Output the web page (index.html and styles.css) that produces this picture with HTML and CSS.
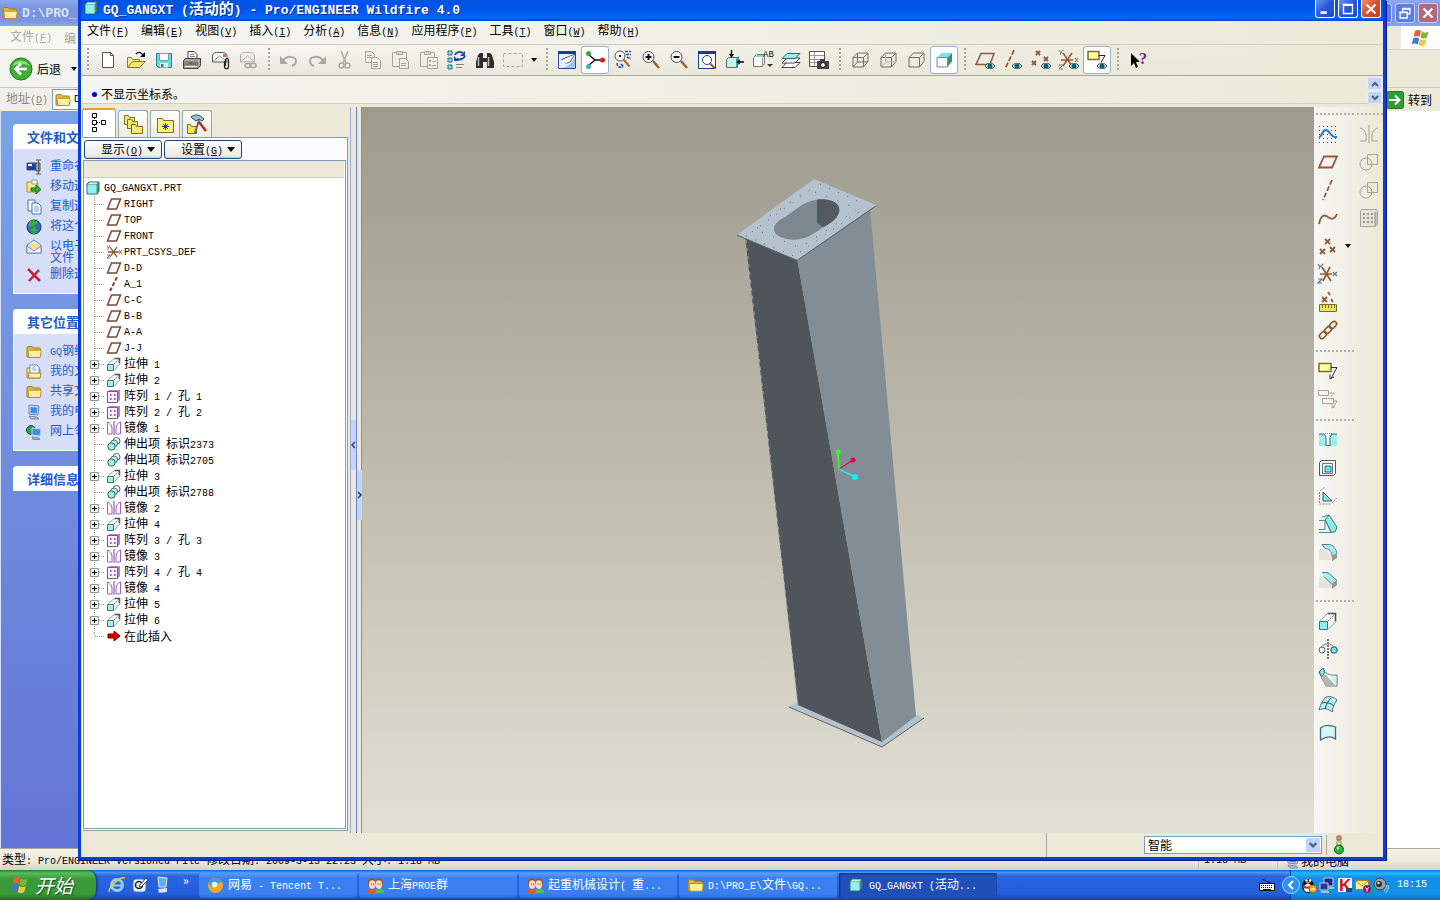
FILE: index.html
```html
<!DOCTYPE html>
<html lang="zh-CN">
<head>
  <meta charset="UTF-8">
  <meta name="viewport" content="width=device-width, initial-scale=1.0">
  <title>GQ_GANGXT (活动的) - Pro/ENGINEER Wildfire 4.0</title>
  <link rel="stylesheet" href="styles.css">
</head>
<body>

<!-- shared icons -->
<svg class="sprite" aria-hidden="true">
  <symbol id="part" viewBox="0 0 14 14"><path d="M1 3l2-2h10v9l-2 3H1z" fill="#4a8f92" stroke="#3a5c60"/><path d="M1.500 3.500h9v9h-9z" fill="#8ff0ee"/><path d="M2 3l1.500-1.500H12L10.500 3z" fill="#c8ffff"/></symbol>
  <symbol id="plane" viewBox="0 0 16 14"><path d="M5.500 2h9l-4 10h-9z" fill="none" stroke="#7a4a34" stroke-width="1.500"/></symbol>
  <symbol id="axis" viewBox="0 0 16 14"><path d="M11 0L4 14" fill="none" stroke="#7a4a24" stroke-width="2" stroke-dasharray="4 2"/></symbol>
  <symbol id="csys" viewBox="0 0 16 14"><path d="M2 7h11M4 2l7 10M11 2L4 12" stroke="#8a5a2c" stroke-width="1.300"/><path d="M1 1l1.500 2L4 0M2.500 3L1.500 5M1 10h3l-3 3h3M13 5l3 4M16 5l-3 4" stroke="#777" fill="none"/></symbol>
  <symbol id="extrude" viewBox="0 0 16 14"><path d="M1.500 7.500h6v6h-6z" fill="#9ff3ea" stroke="#3d7670"/><path d="M8.500 1.500h5v5" fill="none" stroke="#2f5f58" stroke-width="1.500"/><path d="M1.500 7l7-5.500M8 13.500l6-7" stroke="#999" fill="none"/><path d="M8 7l5-5" stroke="#777" stroke-dasharray="2 1"/></symbol>
  <symbol id="pattern" viewBox="0 0 16 14"><path d="M1 3l2-2h11v10l-3 3H1z" fill="#b088c0"/><path d="M1.500 2.500h10v11h-10z" fill="#fbf2ff" stroke="#80508f"/><path d="M4 5h1.500v2H4zM8 5h1.500v2H8zM4 9h1.500v2H4zM8 9h1.500v2H8z" fill="#a04cc0"/></symbol>
  <symbol id="mirror" viewBox="0 0 16 14"><path d="M8 0v14" stroke="#704890"/><path d="M1.500 13V1C4 2 6 4 6 7v6zM14.500 13V1C12 2 10 4 10 7v6z" fill="#fdf8ff" stroke="#a65cc0"/></symbol>
  <symbol id="protrude" viewBox="0 0 16 14"><circle cx="10.500" cy="4" r="3.500" fill="#e8fff8" stroke="#456c66"/><circle cx="8" cy="6.500" r="3.500" fill="#c5f5ea" stroke="#456c66"/><circle cx="5.500" cy="9.500" r="3.700" fill="#9ff0e2" stroke="#2f6058"/></symbol>
  <symbol id="insert" viewBox="0 0 16 14"><path d="M2 5h6V2l6 5-6 5V9H2z" fill="#d80000" stroke="#700"/></symbol>
  <symbol id="b-plus" viewBox="0 0 20 16"><path d="M8.500 0v16M13 8.500h6" stroke="#b48a8a" stroke-dasharray="1 1"/><path d="M4.500 4.500h8v8h-8z" fill="#f2f2ee" stroke="#8a97a0"/><path d="M6 8.500h5M8.500 6v5" stroke="#000"/></symbol>
  <symbol id="b-line" viewBox="0 0 20 16"><path d="M8.500 0v16M9 8.500h10" stroke="#b48a8a" stroke-dasharray="1 1"/></symbol>
  <symbol id="b-end" viewBox="0 0 20 16"><path d="M8.500 0v8M9 8.500h10" stroke="#b48a8a" stroke-dasharray="1 1"/></symbol>
  <symbol id="folder" viewBox="0 0 16 16"><path d="M1 4c0-1 .5-1.500 1.500-1.500H6L7.500 4H13c1 0 1.500.5 1.500 1.500V12c0 1-.5 1.500-1.500 1.500H2.500C1.500 13.500 1 13 1 12z" fill="#e8b83c" stroke="#a07a20"/><path d="M2 7.500c0-1 .5-1.300 1.300-1.300h10.400c1 0 1.500.4 1.500 1.300l-.7 4.800c-.2.900-.7 1.200-1.500 1.200H3z" fill="#ffefa0" stroke="#b88d28"/></symbol>
  <symbol id="eye" viewBox="0 0 10 6"><path d="M0 3c3-4 7-4 10 0-3 4-7 4-10 0z" fill="#cfe8e8" stroke="#345"/><circle cx="5" cy="3" r="2.500" fill="#0d6470"/></symbol>
  <symbol id="flag" viewBox="0 0 20 20"><path d="M4 3c2-1.500 4-1.500 6 0L8.500 9c-2-1.500-4-1.500-6 0z" fill="#e8602c"/><path d="M11 3.500c2 1.500 4 1.500 6.500 0L16 9.500c-2 1.500-4 1.500-6.500 0z" fill="#78b83c"/><path d="M2.200 10.500c2-1.500 4-1.500 6 0l-1.500 6c-2-1.500-4-1.500-6 0z" fill="#3c78d8"/><path d="M9.200 11c2 1.500 4 1.500 6.500 0l-1.500 6c-2 1.500-4 1.500-6.500 0z" fill="#f8c83c"/></symbol>
  <symbol id="pc" viewBox="0 0 16 16"><path d="M3 1l10 1-1 9-9-1z" fill="#d8e4f4" stroke="#6a86b4"/><path d="M4.500 3l7 .5-.6 6-6.400-.6z" fill="#3c90e8"/><path d="M3 12l8 1 2 2H5z" fill="#b8c4d8" stroke="#7a88a4"/></symbol>
  <symbol id="people" viewBox="0 0 18 18"><path d="M0 18c0-8 10-8 10 0z" fill="#e85040"/><path d="M9 17c0-7 9-7 9 0z" fill="#68b84c"/><path d="M1 9C-1 0 9-1 9 5v4zM9 8c0-9 9-8 8 0z" fill="#9c4c20"/><ellipse cx="5.500" cy="8" rx="3.500" ry="4.500" fill="#ffdcb8"/><ellipse cx="12.500" cy="8" rx="3.500" ry="4.500" fill="#ffdcb8"/><path d="M4 7.500h1M6.500 7.500h1M11 7.500h1M13.500 7.500h1" stroke="#502008"/></symbol>
  <symbol id="boxback" viewBox="0 0 20 20"><path d="M3 7.500L7.500 3H18v8.500L13.500 17M13.500 7.500L18 3M3 7.500h10.500V17H3z" fill="none" stroke="#6f6e66"/></symbol>
</svg>

<div class="desktop">

  <!-- Explorer window behind -->
  <section class="explorer">
    <header class="ex-title">
      <svg class="i16"><use href="#folder"/></svg>
      <span class="ex-path">D:\PRO_</span>
      <div class="win-btns">
        <button class="wb dim" aria-label="最小化"></button>
        <button class="wb dim" aria-label="还原"><svg viewBox="0 0 20 20"><path d="M7.500 8V5h8v6h-3M7.500 5.500h8M4.500 9h8v6.500h-8zM4.500 9.500h8" fill="none" stroke="#fff" stroke-width="1.500"/></svg></button>
        <button class="wb dim close" aria-label="关闭"><svg viewBox="0 0 20 20"><path d="M5 5l10 10M15 5L5 15" stroke="#fff" stroke-width="2.500"/></svg></button>
      </div>
    </header>
    <div class="ex-menu">
      <span>文件<span class="en">(<u>F</u>)</span></span><span>编</span>
      <div class="ex-logo"><svg><use href="#flag"/></svg></div>
    </div>
    <div class="ex-tools">
      <svg class="back" viewBox="0 0 24 24"><circle cx="12" cy="12" r="11" fill="#3fae36" stroke="#1d7a1a"/><path d="M3 9C6 2 17 2 21 9c-6-3-12-3-18 0z" fill="#8fe07c"/><path d="M18 12H7M12 6.500L6.500 12l5.500 5.500" fill="none" stroke="#fff" stroke-width="2.500"/></svg>
      <span>后退</span><i class="caret"></i>
    </div>
    <div class="ex-addr">
      <label for="addr">地址<span class="en">(<u>D</u>)</span></label>
      <div class="addr-box"><svg class="i16"><use href="#folder"/></svg><input id="addr" type="text" value="D:"></div>
      <button class="go"><svg viewBox="0 0 18 18"><rect x=".5" y=".5" width="17" height="17" rx="2" fill="#2f9c38" stroke="#1b7424"/><path d="M3 9h10M9 4.500L13.500 9 9 13.500" fill="none" stroke="#fff" stroke-width="2"/></svg>转到</button>
    </div>
    <div class="ex-body">
      <aside class="ex-side">
        <div class="box">
          <h2>文件和文</h2>
          <ul>
            <li><svg viewBox="0 0 16 16"><path d="M1 4h9v7H1z" fill="#1844b0" stroke="#456"/><path d="M2 5h4v2H2z" fill="#fff"/><path d="M10 1h5M12.500 1v14M10 15h5M10 4h4v8h-4z" fill="#aab4c0" stroke="#555"/></svg><a href="#">重命名</a></li>
            <li><svg viewBox="0 0 16 16"><path d="M1 3h5l1 1h5v9H1z" fill="#ffe88c" stroke="#b08c30"/><path d="M6 1h5v4H6z" fill="#fff" stroke="#89a"/><path d="M5 9h5V6l5 4.500L10 15v-3H5z" fill="#3cae30" stroke="#1c6a18"/></svg><a href="#">移动这</a></li>
            <li><svg viewBox="0 0 16 16"><path d="M2 1h7v11H2z" fill="#eef6ff" stroke="#4c78a8"/><path d="M6 4h6l3 3v8H6z" fill="#fff" stroke="#4c78a8"/><path d="M8 8h5M8 10h5M8 12h5" stroke="#7aa4d0"/></svg><a href="#">复制这</a></li>
            <li><svg viewBox="0 0 16 16"><circle cx="8" cy="8" r="7" fill="#2f6ec0" stroke="#235"/><path d="M3 3c4-3 8-1 9 1l-4 3-5 1zM4 12l4-5 4 5H9.500v3h-3v-3z" fill="#38b030"/></svg><a href="#">将这个</a></li>
            <li class="two"><svg viewBox="0 0 16 16"><path d="M1 6l7-5 7 5v8H1z" fill="#dfe9f8" stroke="#6a86b4"/><path d="M3 5h10v5H3z" fill="#ffd98c"/><path d="M1 7l7 5 7-5v7H1z" fill="#f4f8ff" stroke="#6a86b4"/></svg><a href="#">以电子<br>文件</a></li>
            <li><svg viewBox="0 0 16 16"><path d="M2 2l12 12M13 3L3 14" stroke="#c8203c" stroke-width="2.500"/></svg><a href="#">删除这</a></li>
          </ul>
        </div>
        <div class="box">
          <h2>其它位置</h2>
          <ul>
            <li><svg><use href="#folder"/></svg><a href="#"><span class="en">GQ</span>钢结</a></li>
            <li><svg viewBox="0 0 16 16"><path d="M1 4h4l1 1h8v9H1z" fill="#ffe48c" stroke="#a8842c"/><path d="M4 1h7l2 2v7H4z" fill="#fff" stroke="#5c88b8"/><path d="M6 4h4M6 6h5" stroke="#7aa4d0"/><path d="M2 9h13l-1 5H3z" fill="#fff0a8" stroke="#a8842c"/></svg><a href="#">我的文</a></li>
            <li><svg><use href="#folder"/></svg><a href="#">共享文</a></li>
            <li><svg><use href="#pc"/></svg><a href="#">我的电</a></li>
            <li><svg viewBox="0 0 16 16"><circle cx="5" cy="6" r="4.500" fill="#2ca040" stroke="#246"/><path d="M6 4l9 1-1 7-8-1z" fill="#3c90e8" stroke="#c4d4ec"/><path d="M6 13l7 1 1 1.500H7z" fill="#aab8d0" stroke="#78a"/></svg><a href="#">网上邻</a></li>
          </ul>
        </div>
        <div class="box"><h2>详细信息</h2></div>
      </aside>
      <div class="ex-files"></div>
    </div>
    <footer class="ex-status">
      <span class="grow">类型<span class="en">: Pro/ENGINEER Versioned File </span>修改日期<span class="en">: 2009-3-13 22:23 </span>大小<span class="en">: 1.18 MB</span></span>
      <span class="cell size"><span class="en">1.18 MB</span></span>
      <span class="cell comp"><svg class="i16"><use href="#pc"/></svg>我的电脑</span>
    </footer>
  </section>

  <!-- Pro/ENGINEER window -->
  <main class="proe">
    <header class="title">
      <svg class="i14"><use href="#part"/></svg>
      <h1><span class="big">GQ_GANGXT (</span>活动的<span class="big">) - Pro/ENGINEER Wildfire 4.0</span></h1>
      <div class="win-btns">
        <button class="wb" aria-label="最小化"><svg viewBox="0 0 20 20"><path d="M5 14h7" stroke="#fff" stroke-width="3"/></svg></button>
        <button class="wb" aria-label="最大化"><svg viewBox="0 0 20 20"><path d="M5 5h10v10H5zM5 6h10" fill="none" stroke="#fff" stroke-width="1.500"/></svg></button>
        <button class="wb close" aria-label="关闭"><svg viewBox="0 0 20 20"><path d="M5 5l10 10M15 5L5 15" stroke="#fff" stroke-width="2.500"/></svg></button>
      </div>
    </header>

    <nav class="menu">
      <a href="#">文件<span class="en">(<u>F</u>)</span></a>
      <a href="#">编辑<span class="en">(<u>E</u>)</span></a>
      <a href="#">视图<span class="en">(<u>V</u>)</span></a>
      <a href="#">插入<span class="en">(<u>I</u>)</span></a>
      <a href="#">分析<span class="en">(<u>A</u>)</span></a>
      <a href="#">信息<span class="en">(<u>N</u>)</span></a>
      <a href="#">应用程序<span class="en">(<u>P</u>)</span></a>
      <a href="#">工具<span class="en">(<u>T</u>)</span></a>
      <a href="#">窗口<span class="en">(<u>W</u>)</span></a>
      <a href="#">帮助<span class="en">(<u>H</u>)</span></a>
    </nav>

    <div class="toolbar">
      <i class="grip"></i>
      <button aria-label="新建"><svg viewBox="0 0 20 20"><path d="M4.500 2.500h8l3 3v12h-11z" fill="#fff" stroke="#555"/><path d="M12.500 2.500v3h3" fill="none" stroke="#555"/></svg></button>
      <button aria-label="打开"><svg viewBox="0 0 20 20"><path d="M1.500 17V7.500h4l1 2h7V12" fill="#f8f0a0" stroke="#8a7a28"/><path d="M1.500 17.500l5-6h13l-6 6z" fill="#f6e660" stroke="#8a7a28"/><path d="M10 4c2-2.500 5-2 7 1" fill="none" stroke="#000" stroke-width="1.300"/><path d="M19 2v5h-5z" fill="#000"/></svg></button>
      <button aria-label="保存"><svg viewBox="0 0 20 20"><path d="M2.500 3.500h15v14h-13l-2-2z" fill="#6fd8dc" stroke="#2f7f88"/><path d="M5.500 3.500h9v7h-9z" fill="#f4ffff" stroke="#5aa"/><path d="M6 13h8v4.500H6z" fill="#e8f4f4"/><path d="M7 14h2.500v3H7z" fill="#2f7f88"/></svg></button>
      <button aria-label="打印"><svg viewBox="0 0 20 20"><path d="M6 10V1.500h6l3 3V10" fill="#fff" stroke="#444"/><path d="M8 4.500h4M8 6.500h5M8 8.500h5" stroke="#888"/><path d="M1.500 10.500l2-2h15v7l-2.500 3H1.500z" fill="#a8a8a0" stroke="#444"/><path d="M2 11.500h14v4H2z" fill="#787870"/><path d="M3 13h3" stroke="#3c3" stroke-width="2"/><path d="M7 13h3" stroke="#d33" stroke-width="2"/><path d="M3 16.500h12" stroke="#eee"/></svg></button>
      <button aria-label="发送"><svg viewBox="0 0 20 20"><path d="M2.500 12V6c0-2 1.500-3.500 4-3.500h6c3 0 4.500 1.500 4.500 3.500v6z" fill="#f6f6f4" stroke="#555"/><path d="M2.500 12l7-6 8 6" fill="none" stroke="#999"/><path d="M13 4h3v3h-3z" fill="#d66"/><path d="M14.500 11v5.500c0 3 4 3 4 0V10c0-2-3-2-3 0v6" fill="none" stroke="#222" stroke-width="1.200"/></svg></button>
      <button class="off" aria-label="链接"><svg viewBox="0 0 20 20"><path d="M2.500 12V6c0-2 1.500-3.500 4-3.500h6c2.500 0 4 1.500 4 3.500v6z" fill="none" stroke="#b0aea4"/><path d="M2.500 12l7-6 7 6" fill="none" stroke="#b0aea4"/><rect x="7" y="13.500" width="6" height="4" rx="2" fill="none" stroke="#aaa89e" stroke-width="1.500"/><rect x="12" y="13.500" width="6" height="4" rx="2" fill="none" stroke="#aaa89e" stroke-width="1.500"/></svg></button>
      <i class="grip"></i>
      <button class="off" aria-label="撤消"><svg viewBox="0 0 20 20"><path d="M4 11c3-6 13-5 13 0 0 2-1 4-4 5" fill="none" stroke="#aaa89e" stroke-width="2"/><path d="M1 6v8h8z" fill="#aaa89e"/></svg></button>
      <button class="off" aria-label="重做"><svg viewBox="0 0 20 20"><path d="M16 11C13 5 3 6 3 11c0 2 1 4 4 5" fill="none" stroke="#aaa89e" stroke-width="2"/><path d="M19 6v8h-8z" fill="#aaa89e"/></svg></button>
      <button class="off" aria-label="剪切"><svg viewBox="0 0 20 20"><path d="M6 1l5 12M13 1L8 13" stroke="#aaa89e" stroke-width="1.500"/><circle cx="6.500" cy="15.500" r="2.500" fill="none" stroke="#aaa89e" stroke-width="1.500"/><circle cx="12.500" cy="15.500" r="2.500" fill="none" stroke="#aaa89e" stroke-width="1.500"/></svg></button>
      <button class="off" aria-label="复制"><svg viewBox="0 0 20 20"><path d="M2.500 1.500h6l3 3v8h-9z" fill="#f0efe8" stroke="#a5a39a"/><path d="M8.500 7.500h6l3 3v8h-9z" fill="#f0efe8" stroke="#a5a39a"/><path d="M4 5.500h5M4 7.500h4M10 12.500h5M10 14.500h5M10 16.500h5" stroke="#a5a39a"/></svg></button>
      <button class="off" aria-label="粘贴"><svg viewBox="0 0 20 20"><path d="M1.500 2.500h14v14h-14z" fill="none" stroke="#a5a39a"/><path d="M5.500 1.500h6v3h-6z" fill="#d8d6cc" stroke="#a5a39a"/><path d="M8.500 8.500h6l3 3v7h-9z" fill="#f0efe8" stroke="#a5a39a"/><path d="M10 13.500h5M10 15.500h5" stroke="#a5a39a"/></svg></button>
      <button class="off" aria-label="选择性粘贴"><svg viewBox="0 0 20 20"><path d="M1.500 2.500h14v14h-14z" fill="none" stroke="#a5a39a"/><path d="M5.500 1.500h6v3h-6z" fill="#d8d6cc" stroke="#a5a39a"/><path d="M8.500 7.500h10v11h-10z" fill="#f0efe8" stroke="#a5a39a"/><path d="M10 10h2v2h-2zM10 14h2v2h-2z" fill="#a5a39a"/><path d="M13 11.500h4M13 15.500h4" stroke="#a5a39a"/></svg></button>
      <button aria-label="再生"><svg viewBox="0 0 20 20"><path d="M1 1h4v4H1zM1 8h4v4H1zM1 15h4v4H1z" fill="#7fe0dc" stroke="#2c6c78"/><path d="M8 5c1-3 5-4 8-2" fill="none" stroke="#1c4ca8" stroke-width="2"/><path d="M18 1v5h-5z" fill="#1c4ca8"/><path d="M18 6c-1 3-5 4-8 3" fill="none" stroke="#1c4ca8" stroke-width="2"/><path d="M7 6v5h5z" fill="#1c4ca8"/><path d="M9 14.500h8M9 17.500h6" stroke="#888"/></svg></button>
      <button aria-label="查找"><svg viewBox="0 0 20 20"><path d="M3 5l2-2h3v5h4V3h3l2 2 2 7v6h-7v-6H8v6H1v-6z" fill="#2c2c2c"/><path d="M3.500 7v9M13.500 7v9" stroke="#bbb" stroke-width="1.500"/></svg></button>
      <button class="off" aria-label="选择框"><svg viewBox="0 0 20 20"><path d="M.5 3.500h19v13H.5z" fill="none" stroke="#aaa89e" stroke-dasharray="3 2"/></svg></button>
      <button class="drop" aria-label="选择方式"><i class="caret"></i></button>
      <i class="grip"></i>
      <button aria-label="重画"><svg viewBox="0 0 20 20"><path d="M1.500 1.500h17v17h-17z" fill="#e4f0fa" stroke="#2c4c98"/><path d="M1 1h18v3H1z" fill="#1c3c90"/><path d="M2 18c8 0 13-4 16-12v12z" fill="#9cc8ec"/><path d="M5 9h2M8 8h1M7 11h3M10 9h2M8 13h2" stroke="#4c88c0"/><path d="M4 10l9-4 5-2-5 8-3 1" fill="#fff" stroke="#567"/></svg></button>
      <button class="on" aria-label="旋转中心"><svg viewBox="0 0 20 20"><path d="M3 4l7 6h7M10 10l-7 6" fill="none" stroke="#111" stroke-width="1.500"/><circle cx="3.500" cy="3.500" r="2.500" fill="#38a838"/><circle cx="17.500" cy="10" r="2.500" fill="#d02020"/><circle cx="3.500" cy="16.500" r="2.500" fill="#40b0a8"/></svg></button>
      <button aria-label="定向模式"><svg viewBox="0 0 20 20"><circle cx="7" cy="6" r="5" fill="#fbfbf8" stroke="#555"/><path d="M10.500 9.500l6 7" stroke="#a06a3c" stroke-width="2"/><path d="M6 5h2v2H6z" fill="#222"/><path d="M12 1.500h6M13 4.500h5M14 7l4 2M4 13c0 4 3 5 6 4M8 14l3 3" fill="none" stroke="#24489c" stroke-width="1.500" stroke-dasharray="3 1"/></svg></button>
      <button aria-label="放大"><svg viewBox="0 0 20 20"><circle cx="7.500" cy="7" r="5.500" fill="#fbfbf8" stroke="#555"/><path d="M4.500 7h6M7.500 4v6" stroke="#111" stroke-width="2"/><path d="M12 11l6 7" stroke="#9a6038" stroke-width="2.500"/></svg></button>
      <button aria-label="缩小"><svg viewBox="0 0 20 20"><circle cx="7.500" cy="7" r="5.500" fill="#fbfbf8" stroke="#555"/><path d="M4.500 7h6" stroke="#111" stroke-width="2"/><path d="M12 11l6 7" stroke="#9a6038" stroke-width="2.500"/></svg></button>
      <button aria-label="重新调整"><svg viewBox="0 0 20 20"><path d="M1.500 1.500h17v17h-17z" fill="#f4f8fc" stroke="#1c3c90"/><path d="M1 1h18v3H1z" fill="#1c3c90"/><circle cx="10" cy="10" r="4.500" fill="#fff" stroke="#444"/><path d="M13 13.500l5 5" stroke="#8a5a38" stroke-width="2"/></svg></button>
      <button aria-label="重定向"><svg viewBox="0 0 20 20"><path d="M1.500 9.500l2-2h9v10h-11z" fill="#c4f6f2" stroke="#666"/><path d="M11 9l3-3v8l-3 4z" fill="#3c9c98"/><path d="M6.500 0v5M19 12h-5" stroke="#000" stroke-width="1.500"/><path d="M4 4h5l-2.500 4zM15 9.500v5L11.500 12z" fill="#000"/></svg></button>
      <button aria-label="已保存视图"><svg viewBox="0 0 20 20"><path d="M.5 7.500l3-3h8v9l-2 3H.5z" fill="#fbfbf6" stroke="#777"/><path d="M2 7l2-2h7l-2 2z" fill="#6fdcd8"/><path d="M9.500 7.500v8" stroke="#888"/><text x="10" y="7" font-size="9" font-family="Liberation Mono" fill="#111">AB</text><path d="M14 14h6l-3 3z" fill="#333"/></svg></button>
      <button aria-label="层"><svg viewBox="0 0 20 20"><path d="M1 17.500l5-5h13l-5 5z" fill="#fff" stroke="#444"/><path d="M1 13l5-5h13l-5 5z" fill="#fff" stroke="#444"/><path d="M1 8.500l5-5h13l-5 5z" fill="#9af0ec" stroke="#2c6c70"/></svg></button>
      <button aria-label="视图管理器"><svg viewBox="0 0 20 20"><path d="M.5 1.500h15v15H.5z" fill="#fff" stroke="#555"/><path d="M5.500 2v14M1 5.500h14M1 9.500h14M1 12.500h8" stroke="#999"/><path d="M8 11h12v8H8zM11 9h5v2h-5z" fill="#444"/><circle cx="14" cy="15" r="2.500" fill="#fff" stroke="#111"/></svg></button>
      <i class="grip"></i>
      <button aria-label="线框"><svg viewBox="0 0 20 20"><use href="#boxback"/><path d="M7.500 3v9H18M7.500 12L3 17" fill="none" stroke="#6f6e66"/></svg></button>
      <button aria-label="隐藏线"><svg viewBox="0 0 20 20"><use href="#boxback"/><path d="M7.500 3v9H18M7.500 12L3 17" fill="none" stroke="#b4b2a8"/></svg></button>
      <button aria-label="消隐"><svg><use href="#boxback"/></svg></button>
      <button class="on" aria-label="着色"><svg viewBox="0 0 20 20"><path d="M3 7.500L7.500 3H18l-4.500 4.500z" fill="#6fe8e4"/><path d="M13.500 7.500L18 3v8.500L13.500 17z" fill="#2f908c"/><path d="M3 7.500h10.500V17H3z" fill="#fff" stroke="#789"/></svg></button>
      <i class="grip"></i>
      <button aria-label="平面显示"><svg viewBox="0 0 20 20"><path d="M6 3.500h13l-4 11H1z" fill="none" stroke="#94583a" stroke-width="1.500"/><use href="#eye" x="10" y="13" width="10" height="6"/></svg></button>
      <button aria-label="轴显示"><svg viewBox="0 0 20 20"><path d="M11 0L2 19" stroke="#94583a" stroke-width="1.800" stroke-dasharray="5 2"/><use href="#eye" x="9" y="13" width="10" height="6"/></svg></button>
      <button aria-label="点显示"><svg viewBox="0 0 20 20"><path d="M5 1l4 4M9 1L5 5M1 11l4 4M5 11l-4 4M13 7l4 4M17 7l-4 4" stroke="#94583a" stroke-width="1.800"/><use href="#eye" x="10" y="13" width="10" height="6"/></svg></button>
      <button aria-label="坐标系显示"><svg viewBox="0 0 20 20"><path d="M2 10h12M4 3l9 13M13 3L4 16" stroke="#94583a" stroke-width="1.500"/><path d="M0 0l2 3 2-3M2 3L1 5M0 15h4l-4 4h4M16 8l3 4M19 8l-3 4" fill="none" stroke="#777"/><use href="#eye" x="10" y="13" width="10" height="6"/></svg></button>
      <button class="on" aria-label="注释显示"><svg viewBox="0 0 20 20"><path d="M1 1.500h11v8H1z" fill="#ffff9c" stroke="#77702c" stroke-width="1.500"/><path d="M12 5.500h6l-4 7" fill="none" stroke="#222"/><use href="#eye" x="10" y="13" width="10" height="6"/></svg></button>
      <i class="grip"></i>
      <button aria-label="上下文帮助"><svg viewBox="0 0 20 20"><path d="M3 3v13l3-3 2 5 2-1-2-5h4z" fill="#000"/><text x="11" y="14" font-size="16" font-weight="bold" font-family="Liberation Serif" fill="#6c1c78">?</text></svg></button>
    </div>

    <div class="message">
      <p><b class="dot"></b>不显示坐标系。</p>
      <div class="spin">
        <button aria-label="上"><svg viewBox="0 0 10 8"><path d="M2 6l3-3 3 3" fill="none" stroke="#4d6185" stroke-width="2"/></svg></button>
        <button aria-label="下"><svg viewBox="0 0 10 8"><path d="M2 2l3 3 3-3" fill="none" stroke="#4d6185" stroke-width="2"/></svg></button>
      </div>
    </div>

    <div class="work">
      <section class="nav">
        <div class="tabs">
          <button class="tab active" aria-label="模型树"><svg viewBox="0 0 20 20"><path d="M3.500 1.500h4v4h-4zM3.500 8.500h4v4h-4zM3.500 15.500h4v4h-4zM12.500 8.500h4v4h-4z" fill="#fff" stroke="#000"/><path d="M5.500 6v2M5.500 13v2M8 10.500h4" stroke="#000" stroke-dasharray="1 1"/></svg></button>
          <button class="tab" aria-label="文件夹浏览器"><svg viewBox="0 0 20 20"><g fill="#f6e86c" stroke="#76702c"><path d="M1.500 1.500h4l1 2h5v7h-10z"/><path d="M4.500 5.500h4l1 2h5v7h-10z"/><path d="M8.500 10.500h4l1 2h6v7h-11z"/></g></svg></button>
          <button class="tab" aria-label="收藏夹"><svg viewBox="0 0 20 20"><path d="M2.500 4.500h5l1 2h10v12h-16z" fill="#fff27c" stroke="#76702c"/><path d="M10.500 9v7M7 12.500h7M8 10l5 5M13 10l-5 5" stroke="#1c3c90"/></svg></button>
          <button class="tab" aria-label="连接"><svg viewBox="0 0 20 20"><path d="M.5 10.500h3l1 2h5v7h-9z" fill="#f6e64c" stroke="#76702c"/><path d="M4 3c3-3 9-3 13 2l-2 2-3-2-3 2z" fill="#9cc4cc" stroke="#345"/><path d="M12 6L8 19" stroke="#667" stroke-width="2"/><path d="M12 8l7 9" stroke="#c02020" stroke-width="2.500"/></svg></button>
        </div>
        <div class="panel">
          <div class="actions">
            <button>显示<span class="en">(<u>O</u>)</span><i class="caret"></i></button>
            <button>设置<span class="en">(<u>G</u>)</span><i class="caret"></i></button>
          </div>
          <div class="tree-box">
            <div class="tree-head"></div>
            <ul class="tree">
              <li class="root"><svg class="i14"><use href="#part"/></svg><span class="en">GQ_GANGXT.PRT</span></li>
              <li><svg class="br"><use href="#b-line"/></svg><svg class="ti"><use href="#plane"/></svg><span class="en">RIGHT</span></li>
              <li><svg class="br"><use href="#b-line"/></svg><svg class="ti"><use href="#plane"/></svg><span class="en">TOP</span></li>
              <li><svg class="br"><use href="#b-line"/></svg><svg class="ti"><use href="#plane"/></svg><span class="en">FRONT</span></li>
              <li><svg class="br"><use href="#b-line"/></svg><svg class="ti"><use href="#csys"/></svg><span class="en">PRT_CSYS_DEF</span></li>
              <li><svg class="br"><use href="#b-line"/></svg><svg class="ti"><use href="#plane"/></svg><span class="en">D-D</span></li>
              <li><svg class="br"><use href="#b-line"/></svg><svg class="ti"><use href="#axis"/></svg><span class="en">A_1</span></li>
              <li><svg class="br"><use href="#b-line"/></svg><svg class="ti"><use href="#plane"/></svg><span class="en">C-C</span></li>
              <li><svg class="br"><use href="#b-line"/></svg><svg class="ti"><use href="#plane"/></svg><span class="en">B-B</span></li>
              <li><svg class="br"><use href="#b-line"/></svg><svg class="ti"><use href="#plane"/></svg><span class="en">A-A</span></li>
              <li><svg class="br"><use href="#b-line"/></svg><svg class="ti"><use href="#plane"/></svg><span class="en">J-J</span></li>
              <li><button aria-label="展开"><svg class="br"><use href="#b-plus"/></svg></button><svg class="ti"><use href="#extrude"/></svg><span>拉伸<span class="en"> 1</span></span></li>
              <li><button aria-label="展开"><svg class="br"><use href="#b-plus"/></svg></button><svg class="ti"><use href="#extrude"/></svg><span>拉伸<span class="en"> 2</span></span></li>
              <li><button aria-label="展开"><svg class="br"><use href="#b-plus"/></svg></button><svg class="ti"><use href="#pattern"/></svg><span>阵列<span class="en"> 1 / </span>孔<span class="en"> 1</span></span></li>
              <li><button aria-label="展开"><svg class="br"><use href="#b-plus"/></svg></button><svg class="ti"><use href="#pattern"/></svg><span>阵列<span class="en"> 2 / </span>孔<span class="en"> 2</span></span></li>
              <li><button aria-label="展开"><svg class="br"><use href="#b-plus"/></svg></button><svg class="ti"><use href="#mirror"/></svg><span>镜像<span class="en"> 1</span></span></li>
              <li><svg class="br"><use href="#b-line"/></svg><svg class="ti"><use href="#protrude"/></svg><span>伸出项<span class="en"> </span>标识<span class="en">2373</span></span></li>
              <li><svg class="br"><use href="#b-line"/></svg><svg class="ti"><use href="#protrude"/></svg><span>伸出项<span class="en"> </span>标识<span class="en">2705</span></span></li>
              <li><button aria-label="展开"><svg class="br"><use href="#b-plus"/></svg></button><svg class="ti"><use href="#extrude"/></svg><span>拉伸<span class="en"> 3</span></span></li>
              <li><svg class="br"><use href="#b-line"/></svg><svg class="ti"><use href="#protrude"/></svg><span>伸出项<span class="en"> </span>标识<span class="en">2788</span></span></li>
              <li><button aria-label="展开"><svg class="br"><use href="#b-plus"/></svg></button><svg class="ti"><use href="#mirror"/></svg><span>镜像<span class="en"> 2</span></span></li>
              <li><button aria-label="展开"><svg class="br"><use href="#b-plus"/></svg></button><svg class="ti"><use href="#extrude"/></svg><span>拉伸<span class="en"> 4</span></span></li>
              <li><button aria-label="展开"><svg class="br"><use href="#b-plus"/></svg></button><svg class="ti"><use href="#pattern"/></svg><span>阵列<span class="en"> 3 / </span>孔<span class="en"> 3</span></span></li>
              <li><button aria-label="展开"><svg class="br"><use href="#b-plus"/></svg></button><svg class="ti"><use href="#mirror"/></svg><span>镜像<span class="en"> 3</span></span></li>
              <li><button aria-label="展开"><svg class="br"><use href="#b-plus"/></svg></button><svg class="ti"><use href="#pattern"/></svg><span>阵列<span class="en"> 4 / </span>孔<span class="en"> 4</span></span></li>
              <li><button aria-label="展开"><svg class="br"><use href="#b-plus"/></svg></button><svg class="ti"><use href="#mirror"/></svg><span>镜像<span class="en"> 4</span></span></li>
              <li><button aria-label="展开"><svg class="br"><use href="#b-plus"/></svg></button><svg class="ti"><use href="#extrude"/></svg><span>拉伸<span class="en"> 5</span></span></li>
              <li><button aria-label="展开"><svg class="br"><use href="#b-plus"/></svg></button><svg class="ti"><use href="#extrude"/></svg><span>拉伸<span class="en"> 6</span></span></li>
              <li><svg class="br"><use href="#b-end"/></svg><svg class="ti"><use href="#insert"/></svg><span>在此插入</span></li>
            </ul>
          </div>
        </div>
      </section>

      <div class="sashes">
        <div class="sash up"><button aria-label="折叠"><svg viewBox="0 0 5 8"><path d="M4 1L1 4l3 3" fill="none" stroke="#23407c" stroke-width="1.500"/></svg></button></div>
        <div class="sash down"><button aria-label="展开"><svg viewBox="0 0 5 8"><path d="M1 1l3 3-3 3" fill="none" stroke="#23407c" stroke-width="1.500"/></svg></button></div>
      </div>

      <section class="viewport">
        <svg viewBox="362 107 952 726">
          <!-- base plate -->
          <path d="M789 706l8-3 85 38 34-26 8 3-42 29z" fill="#b4c2ce"/>
          <path d="M789 707l93 40 42-29" fill="none" stroke="#59626b"/>
          <!-- faces -->
          <path d="M745 236l52 22 85 484-84-37z" fill="#4f555b"/>
          <path d="M797 258l73-50 46 508-34 26z" fill="#828d95"/>
          <path d="M746 240l52 465" fill="none" stroke="#9aa5ac" stroke-dasharray="3 5"/>
          <!-- top plate -->
          <path d="M737 235l77-56 62 26-79 55z" fill="#b4c2ce"/>
          <path d="M737 235l60 25.500L876 206" fill="none" stroke="#5c666f"/>
          <clipPath id="slot"><path d="M774 229c0-5 5-9 11-12l17-12c9-6 22-7 30-4 7 3 9 8 6 14-2 4-6 7-11 10l-14 9c-9 6-21 7-30 4-6-2-9-5-9-9z"/></clipPath>
          <g clip-path="url(#slot)"><path d="M770 195h72v50h-72z" fill="#7d888e"/><path d="M817 195h25v20l-16 14-9-6z" fill="#545a60"/></g>
          <path d="M752 232l62-45M746 236l48 20M800 252l66-45M820 184l44 20M757 228l6-3" fill="none" stroke="#54606c" stroke-dasharray="1 9"/>
          <path d="M762 232l36 15M806 244l50-34M815 192l38 15M770 216l32-22" fill="none" stroke="#54606c" stroke-dasharray="1 11"/>
          <!-- spin centre -->
          <path d="M839 469l-1-16" stroke="#40ff20" stroke-width="1.500"/><circle cx="838" cy="452" r="2.500" fill="#30ff20"/>
          <path d="M839 469l14-9" stroke="#e00848" stroke-width="1.200"/><circle cx="853" cy="460" r="2.500" fill="#e00848"/>
          <path d="M839 469l16 8" stroke="#20e8f8" stroke-width="1.500"/><circle cx="855" cy="477" r="3" fill="#10f0ff"/>
        </svg>
      </section>

      <section class="rail">
        <div class="rail-a">
          <i class="rule"></i>
          <button aria-label="草绘"><svg viewBox="0 0 20 20"><path d="M1 2.500h18M1 6.500h18M1 10.500h18M1 14.500h18M1 18.500h18" stroke="#2858a8" stroke-dasharray="1 3"/><path d="M1 13c3 0 3-7 7-7s4 8 11 7" fill="none" stroke="#1c78d8" stroke-width="2"/></svg></button>
          <button aria-label="平面"><svg viewBox="0 0 20 20"><path d="M6 4.500h13l-5 11H1z" fill="none" stroke="#94583a" stroke-width="1.800"/></svg></button>
          <button aria-label="轴"><svg viewBox="0 0 20 20"><path d="M14 0L5 20" stroke="#94583a" stroke-width="1.800" stroke-dasharray="5 2"/></svg></button>
          <button aria-label="曲线"><svg viewBox="0 0 20 20"><path d="M1 16C3 7 6 6 10 9s7 2 9-3" fill="none" stroke="#94583a" stroke-width="1.800"/></svg></button>
          <div class="pair"><button aria-label="点"><svg viewBox="0 0 20 20"><path d="M7 3l5 5M12 3L7 8M2 13l5 5M7 13l-5 5M12 11l5 5M17 11l-5 5" stroke="#94583a" stroke-width="1.800"/></svg></button><button class="drop" aria-label="点类型"><i class="caret"></i></button></div>
          <button aria-label="坐标系"><svg viewBox="0 0 20 20"><path d="M2 10h12M4 3l9 14M12 3L5 17" stroke="#94583a" stroke-width="1.700"/><path d="M0 0l2 3 3-3M2 3L1 5M0 15h4l-4 4h4M15 8l4 4M19 8l-4 4" fill="none" stroke="#6c7480" stroke-width="1.200"/></svg></button>
          <button aria-label="分析"><svg viewBox="0 0 20 20"><path d="M4 5l5 5M9 5l-5 5M10 0l2 3M13 7l2 3" stroke="#94583a" stroke-width="1.800"/><path d="M1.500 12.500h17v7h-17z" fill="#f0e060" stroke="#76702c"/><path d="M4.500 13v3M7.500 13v3M10.500 13v3M13.500 13v3M16.500 13v3" stroke="#76702c"/></svg></button>
          <button aria-label="参照"><svg viewBox="0 0 20 20"><g fill="none" stroke="#8a5a2c" stroke-width="1.600"><rect x="-4" y="-2.500" width="8" height="5" rx="2.500" transform="translate(5 15) rotate(-45)"/><rect x="-4" y="-2.500" width="8" height="5" rx="2.500" transform="translate(10 10) rotate(-45)"/><rect x="-4" y="-2.500" width="8" height="5" rx="2.500" transform="translate(15 5) rotate(-45)"/></g></svg></button>
          <i class="rule"></i>
          <button aria-label="注释"><svg viewBox="0 0 20 20"><path d="M1 2.500h12v8H1z" fill="#ffff9c" stroke="#77702c" stroke-width="1.500"/><path d="M13 6.500h6l-6 11M12 13.500v4.500l4-2" fill="none" stroke="#333"/></svg></button>
          <button class="off" aria-label="注释传播"><svg viewBox="0 0 20 20"><path d="M.5 1.500h10v5H.5zM4.500 9.500h11v5h-11zM11 4h5l-3 4M15 12h4l-4 7M14 15v4l3-1" fill="none" stroke="#a5a39a"/></svg></button>
          <i class="rule"></i>
          <button aria-label="孔"><svg viewBox="0 0 20 20"><path d="M1 4h5l2 3v9H1zM19 4h-5l-2 3v9h7z" fill="#9eecec"/><path d="M1 4h5l2 3v9M19 4h-5l-2 3v9M8 15.500h4" fill="none" stroke="#3c6c70"/><path d="M7 3.500h7" stroke="#888" stroke-dasharray="1 1"/></svg></button>
          <button aria-label="壳"><svg viewBox="0 0 20 20"><path d="M1.500 4.500l2-2h14v13l-2 2h-14z" fill="#f4f4ee" stroke="#555"/><path d="M4.500 5.500h10v10h-10z" fill="#fff" stroke="#678"/><path d="M7 8h6v6H7z" fill="#6fe4e0" stroke="#367"/></svg></button>
          <button aria-label="筋"><svg viewBox="0 0 20 20"><path d="M1.500 6v12h12M2 5l5-4M14 17l5-5" fill="none" stroke="#888" stroke-dasharray="2 1"/><path d="M5 6v9h9z" fill="#7fe8e4" stroke="#456"/></svg></button>
          <button aria-label="拔模"><svg viewBox="0 0 20 20"><path d="M1 6.500h6v9H1M1 18.500h13" fill="none" stroke="#4c8c90"/><path d="M7 6l4-5 8 12-2 5h-4z" fill="#8ceeee" stroke="#367c80"/><path d="M4 3l7-2M13 18L8 7" fill="none" stroke="#678"/></svg></button>
          <button aria-label="倒圆角"><svg viewBox="0 0 20 20"><path d="M1 8h6c4 2 6 5 6 10H1z" fill="#e4e4da"/><path d="M4 2.500h6c5 0 8 4 9 9l-5 3c0-5-3-8-7-8z" fill="#9feef2" stroke="#678"/><path d="M14 14l5-3v5l-5 3z" fill="#98988c"/></svg></button>
          <button aria-label="倒角"><svg viewBox="0 0 20 20"><path d="M1 8h6l6 6v4H1z" fill="#e4e4da"/><path d="M4 2.500h6l9 8-5 4-8-8" fill="#9feef2" stroke="#678"/><path d="M14 14l5-4v5l-5 4z" fill="#98988c"/></svg></button>
          <i class="rule"></i>
          <button aria-label="拉伸"><svg viewBox="0 0 20 20"><path d="M1.500 10.500h8v8h-8z" fill="#8cf0f0" stroke="#3d7680"/><path d="M9.500 2.500h8v8" fill="none" stroke="#2f5f58" stroke-width="1.500"/><path d="M1.500 10l8-7.500M10 18.500l8-8" stroke="#999" fill="none"/><path d="M10 10l7-7" stroke="#777" stroke-dasharray="2 1"/></svg></button>
          <button aria-label="旋转"><svg viewBox="0 0 20 20"><path d="M10 0v20" stroke="#000" stroke-dasharray="2 1"/><circle cx="4" cy="11" r="3" fill="#e8ffff" stroke="#567"/><circle cx="16" cy="11" r="3.200" fill="#6fe4ec" stroke="#345"/><path d="M3 8c3-4 10-4 13 0" fill="none" stroke="#777"/></svg></button>
          <button aria-label="可变截面扫描"><svg viewBox="0 0 20 20"><path d="M1 5l4-4c1 5 6 8 14 7v11H8z" fill="#fff" stroke="#678"/><path d="M1 5l4-4 2 4-3 5z" fill="#7fe8e8" stroke="#367"/><path d="M4 9l3-2 11 12H8z" fill="#b4b8b0"/><path d="M12 10l6-1v9z" fill="#b8f6f4"/></svg></button>
          <button aria-label="边界混合"><svg viewBox="0 0 20 20"><path d="M1 15C3 8 5 5 8 2c4-1 8 0 11 3-3 4-4 7-5 12-4-4-9-4-13-2z" fill="#b4f4f2" stroke="#567"/><path d="M4 8c4-1 9 0 12 3M13 3c-3 3-5 7-6 11" fill="none" stroke="#345"/></svg></button>
          <button aria-label="造型"><svg viewBox="0 0 20 20"><path d="M2.500 17V5c4-3 10-3 15-1v12c-4-3-9-3-15 1z" fill="#cdf8f4" stroke="#567" stroke-width="1.300"/></svg></button>
        </div>
        <div class="rail-b">
          <i class="rule"></i>
          <button class="off" aria-label="镜像"><svg viewBox="0 0 20 20"><path d="M10 1v18M1 4c4 1 6 4 6 7v6H1M19 4c-4 1-6 4-6 7v6h6" fill="none" stroke="#a5a39a"/></svg></button>
          <button class="off" aria-label="合并"><svg viewBox="0 0 20 20"><path d="M8.500 2.500h10v10h-10z" fill="none" stroke="#a5a39a"/><circle cx="7" cy="12" r="6" fill="none" stroke="#a5a39a"/></svg></button>
          <button class="off" aria-label="修剪"><svg viewBox="0 0 20 20"><path d="M8.500 2.500h10v10h-10z" fill="none" stroke="#a5a39a"/><circle cx="7" cy="12" r="6" fill="none" stroke="#a5a39a"/></svg></button>
          <button class="off" aria-label="阵列"><svg viewBox="0 0 20 20"><path d="M1.500 3.500l1-2h15l1 1v14l-2 2h-15z" fill="#e4e3da" stroke="#a5a39a"/><path d="M16.500 4v14" stroke="#a5a39a" stroke-width="2"/><path d="M4 6h10M4 10h10M4 14h10" stroke="#98968c" stroke-width="2" stroke-dasharray="2 2"/></svg></button>
        </div>
      </section>
    </div>

    <footer class="status">
      <div class="status-l"></div>
      <div class="status-r">
        <div class="combo">
          <select aria-label="过滤器"><option>智能</option></select>
          <svg viewBox="0 0 15 15"><rect width="15" height="15" rx="1" fill="#c1d3fb"/><path d="M4 5.500L7.500 9 11 5.500" fill="none" stroke="#4d6185" stroke-width="2.500"/></svg>
        </div>
        <div class="light"><svg viewBox="0 0 12 20"><path d="M4 1h4v4H4z" fill="#d89088" stroke="#a06058"/><path d="M4 6h4v5H4z" fill="#f0f0a8" stroke="#888850"/><circle cx="6" cy="14.500" r="4.500" fill="#2fae38" stroke="#155c1c"/><circle cx="5" cy="13" r="1.500" fill="#a8f0a0"/></svg></div>
      </div>
    </footer>
  </main>
</div>

<!-- XP taskbar -->
<footer class="taskbar">
  <button class="start"><svg><use href="#flag"/></svg><em>开始</em></button>
  <div class="quick">
    <svg viewBox="0 0 18 18"><circle cx="9" cy="9" r="5.500" fill="none" stroke="#8cd0ff" stroke-width="3"/><path d="M4 9.500h11" stroke="#8cd0ff" stroke-width="2"/><path d="M1 16C0 12 12 0 17 2" fill="none" stroke="#f8c838" stroke-width="1.500"/></svg>
    <svg viewBox="0 0 18 18"><rect x="2" y="3" width="13" height="13" rx="3" fill="#e8f4ff" stroke="#3c78b8"/><circle cx="8" cy="9" r="3.500" fill="none" stroke="#222" stroke-width="1.500"/><path d="M8 10l7-8 2 2-7 7z" fill="#fff" stroke="#246"/></svg>
    <svg viewBox="0 0 18 18"><path d="M4 1l9 1-1 9H5z" fill="#5cb0f4" stroke="#d8ecff"/><path d="M4 13l9-1v4l-8 1z" fill="#d8e4f0"/></svg>
    <span class="more">»</span>
  </div>
  <div class="tasks">
    <button><svg viewBox="0 0 18 18"><circle cx="9" cy="9" r="8" fill="#f0a820"/><path d="M2 5c3-5 11-5 14 0-3 1-6 1-7 5-3 1-7 0-7-5z" fill="#3c9ce8"/><circle cx="8" cy="8" r="3" fill="#e8f6ff"/></svg><span>网易<span class="en"> - Tencent T...</span></span></button>
    <button><svg><use href="#people"/></svg><span>上海<span class="en">PROE</span>群</span></button>
    <button><svg><use href="#people"/></svg><span>起重机械设计<span class="en">( </span>重<span class="en">...</span></span></button>
    <button><svg><use href="#folder"/></svg><span><span class="en">D:\PRO_E\</span>文件<span class="en">\GQ...</span></span></button>
    <button class="cur"><svg class="i14"><use href="#part"/></svg><span><span class="en">GQ_GANGXT (</span>活动<span class="en">...</span></span></button>
  </div>
  <svg class="kbd" viewBox="0 0 16 14"><path d="M3 1c1 2 3 0 4 2s3 0 5 2" fill="none" stroke="#111"/><rect x=".5" y="5.500" width="15" height="7" fill="#fff" stroke="#111"/><path d="M2 7.500h12M2 9.500h12" stroke="#111" stroke-dasharray="1 1"/><path d="M4 11.500h8" stroke="#111"/></svg>
  <div class="tray">
    <button aria-label="显示隐藏图标"><svg viewBox="0 0 18 18"><circle cx="9" cy="9" r="8.500" fill="#2c90f0" stroke="#9cd4ff"/><path d="M11 5L7 9l4 4" fill="none" stroke="#fff" stroke-width="2"/></svg></button>
    <svg viewBox="0 0 18 18"><ellipse cx="8" cy="10" rx="6" ry="7" fill="#181818"/><ellipse cx="8" cy="12" rx="4" ry="4" fill="#fff"/><path d="M3 9c3 2 8 2 10 0v3c-3 1-7 1-10 0z" fill="#d82818"/><path d="M5.500 6h5l-2.500 2z" fill="#f8a820"/><circle cx="6.500" cy="4.500" r="1.200" fill="#fff"/><circle cx="10" cy="4.500" r="1.200" fill="#fff"/><circle cx="13" cy="13" r="4" fill="#f8a030" stroke="#a85c10"/><path d="M11 13h4" stroke="#fff" stroke-width="1.500"/></svg>
    <svg viewBox="0 0 18 18"><path d="M6 2h9v8H6z" fill="#1c2c80" stroke="#c0cce8"/><path d="M2 7h8v7H2z" fill="#28389c" stroke="#c0cce8"/><path d="M3 16h8M11 12h5" stroke="#b4bccc" stroke-width="2"/></svg>
    <svg viewBox="0 0 18 18"><path d="M2 2h14v14H2z" fill="#f4f4f4"/><text x="3" y="15" font-size="17" font-weight="bold" font-family="Liberation Sans" fill="#c81818">K</text><path d="M10 12h6v4h-6z" fill="#444"/></svg>
    <svg viewBox="0 0 18 18"><path d="M1.500 4.500h13v9h-13z" fill="#fff08c" stroke="#a88820"/><path d="M2 5l6 5 6-5" fill="none" stroke="#a88820"/><circle cx="13" cy="13" r="4" fill="#a01c60"/><path d="M11.500 11.500l1.500 2 1.500-2M13 13.500v2" fill="none" stroke="#fff"/></svg>
    <svg viewBox="0 0 18 18"><circle cx="8" cy="8" r="6" fill="#98a0a8" stroke="#444"/><circle cx="7" cy="8" r="3" fill="#333"/><circle cx="6.500" cy="7" r="1.200" fill="#ddd"/><path d="M14 9c1 2 0 4-2 6M16 9c1 3 0 6-3 8" fill="none" stroke="#b8d8f8"/></svg>
    <time class="en">18:15</time>
  </div>
</footer>

</body>
</html>
```
FILE: styles.css
```css
* {
  box-sizing: border-box;
}

body {
  margin: 0;
  height: 100vh;
  display: flex;
  flex-direction: column;
  overflow: hidden;
  font-family: "Noto Sans CJK SC", sans-serif;
  font-size: 12px;
  line-height: 16px;
  color: #000;
  background: #ece9d8;
}

button {
  margin: 0;
  padding: 0;
  border: 0;
  background: none;
  font: inherit;
  color: inherit;
}

ul, h1, h2, p {
  margin: 0;
  padding: 0;
  list-style: none;
}

a {
  color: inherit;
  text-decoration: none;
}

svg {
  display: block;
  flex: none;
  overflow: visible;
}

.sprite {
  position: absolute;
  width: 0;
  height: 0;
}

/* half-width latin next to 12px hanzi */
.en {
  font-family: "Liberation Mono", monospace;
  font-size: 10px;
  white-space: pre;
}

.i14 { width: 14px; height: 14px; }
.i16 { width: 16px; height: 16px; }

.caret {
  border: 3px solid transparent;
  border-top: 4px solid #000;
  border-bottom: 0;
}

.desktop {
  flex: 1;
  min-height: 0;
  position: relative;
}

/* window buttons */
.win-btns {
  display: flex;
  gap: 3px;
  margin-left: auto;
}

.wb {
  width: 20px;
  height: 20px;
  border: 1px solid #fff;
  border-radius: 3px;
  background: linear-gradient(135deg, #6a92f0, #2458dc 50%, #1c48c8);
}

.wb svg { width: 18px; height: 18px; }
.wb.close { background: linear-gradient(135deg, #f09070, #dc4c24 50%, #c83c14); }
.wb.dim { border-color: #c4d0f4; background: #5c7ce0; }
.wb.dim.close { background: #b4687c; }

/* explorer */
.explorer {
  height: 100%;
  display: flex;
  flex-direction: column;
  white-space: nowrap;
}

.ex-title {
  height: 26px;
  display: flex;
  align-items: center;
  padding: 0 2px;
  background: linear-gradient(#8ea8ec, #7a96e0 30%, #7a94e0 80%, #8ca8ec);
}

.ex-path {
  margin-left: 4px;
  font: bold 13px "Liberation Mono", monospace;
  color: #dce4f8;
}

.ex-menu {
  height: 24px;
  display: flex;
  align-items: center;
  gap: 12px;
  padding-left: 10px;
  color: #aca899;
  background: linear-gradient(90deg, #f6f6f4, #ece9d8);
  border-bottom: 1px solid #d8d4c4;
}

.ex-logo {
  align-self: stretch;
  width: 39px;
  margin-left: auto;
  display: grid;
  place-items: center;
  background: #fff;
}

.ex-logo svg { width: 20px; height: 20px; }

.ex-tools {
  height: 38px;
  display: flex;
  align-items: center;
  gap: 4px;
  padding-left: 9px;
  background: linear-gradient(90deg, #f4f4f0, #ece9d8);
  border-bottom: 1px solid #d0ccbc;
}

.ex-tools .caret { margin-left: 6px; }
.back { width: 24px; height: 24px; }

.ex-addr {
  height: 23px;
  display: flex;
  align-items: center;
  padding: 0 8px 0 6px;
  color: #8c8a80;
  background: linear-gradient(90deg, #f0efe8, #ece9d8);
}

.addr-box {
  flex: 1;
  height: 21px;
  margin: 0 4px;
  display: flex;
  align-items: center;
  gap: 3px;
  padding-left: 2px;
  background: #fff;
  border: 1px solid #7f9db9;
}

.addr-box input {
  flex: 1;
  min-width: 0;
  border: 0;
  padding: 0;
  font: 10px "Liberation Mono", monospace;
}

.go {
  display: flex;
  align-items: center;
  gap: 4px;
  color: #000;
}

.go svg { width: 18px; height: 18px; }

.ex-body {
  flex: 1;
  min-height: 0;
  display: flex;
  border-left: 1px solid #d8e0f4;
}

.ex-side {
  width: 200px;
  padding: 13px 12px;
  background: linear-gradient(#7ba2e7, #6375d6);
  display: flex;
  flex-direction: column;
  gap: 15px;
}

.box h2 {
  height: 25px;
  padding: 0 14px;
  line-height: 25px;
  font-size: 13px;
  color: #215dc6;
  background: #fff;
  border-radius: 4px 4px 0 0;
}

.box ul {
  padding: 8px 12px;
  background: #d6dff7;
  border: 1px solid #fff;
  border-top: 0;
}

.box li {
  height: 20px;
  display: flex;
  gap: 8px;
  color: #215dc6;
}

.box li svg { width: 16px; height: 16px; margin-top: 2px; }

.box li.two {
  height: 28px;
  line-height: 12px;
}

.box li.two a { padding-top: 2px; }

.ex-files {
  flex: 1;
  background: #fff;
}

.ex-status {
  height: 22px;
  display: flex;
  align-items: center;
  padding-top: 2px;
  border-top: 1px solid #aca899;
  background: linear-gradient(#f4f2e8, #ece9d8 60%, #d8d4c0);
}

.ex-status .grow { flex: 1; padding-left: 2px; }

.ex-status .cell {
  display: flex;
  align-items: center;
  border-left: 1px solid #c8c4b4;
}

.ex-status .size { width: 79px; padding-left: 5px; }
.ex-status .comp { width: 163px; padding-left: 7px; }

/* main window */
.proe {
  position: absolute;
  top: 0;
  right: 54px;
  bottom: 10px;
  left: 78px;
  display: flex;
  flex-direction: column;
  border: 3px solid #0a3cd8;
  border-top: 0;
  box-shadow: 1px 1px #001a90;
  background: #ece9d8;
}

.title {
  height: 21px;
  display: flex;
  align-items: flex-start;
  gap: 5px;
  padding: 0 2px;
  color: #fff;
  background: linear-gradient(#0054e3, #0055e6 40%, #0068ff 85%, #0040d0);
}

.title .i14 { margin: 1px 0 0 1px; }

.title h1 {
  font-size: 15px;
  line-height: 15px;
  text-shadow: 1px 1px #0a2a8c;
  white-space: nowrap;
}

.big {
  font-family: "Liberation Mono", monospace;
  font-size: 13px;
  white-space: pre;
}

.title .wb { height: 18px; border-top: 0; border-radius: 0 0 3px 3px; }

.menu {
  height: 24px;
  display: flex;
  align-items: center;
  gap: 12px;
  padding: 0 6px 3px;
  background: linear-gradient(90deg, #f6f6f4, #ece9d8);
  border-bottom: 1px solid #d0ccbc;
  white-space: nowrap;
}

.toolbar {
  height: 31px;
  display: flex;
  align-items: center;
  background: linear-gradient(90deg, transparent, #ece9d8), linear-gradient(#fafaf8, #e8e6dc);
  border-bottom: 1px solid #aca899;
}

.toolbar button,
.rail button {
  width: 28px;
  height: 28px;
  display: grid;
  place-items: center;
  border: 1px solid transparent;
  border-radius: 3px;
}

.toolbar button svg,
.rail button svg {
  width: 20px;
  height: 20px;
}

.toolbar button.on {
  background: #fff;
  border-color: #98b0cc;
}

.toolbar .drop,
.rail .drop { width: 13px; }

.grip {
  width: 13px;
  height: 24px;
  background: linear-gradient(#a8a69a 50%, transparent 50%) 50% 0 / 2px 4px repeat-y;
}

.message {
  height: 31px;
  display: flex;
  padding-right: 1px;
  background: linear-gradient(90deg, #f4f4f0, #ece9d8);
  border-bottom: 3px solid #ece9d8;
  box-shadow: inset 0 -1px #d4d0c0;
}

.message p {
  flex: 1;
  display: flex;
  align-items: center;
  gap: 4px;
  padding: 8px 0 0 11px;
}

.dot {
  width: 5px;
  height: 5px;
  border-radius: 50%;
  background: #0000d8;
}

.spin {
  display: flex;
  flex-direction: column;
  gap: 1px;
  padding-top: 1px;
}

.spin button {
  width: 15px;
  height: 13px;
  display: grid;
  place-items: center;
  background: #c1d3fb;
  border: 1px solid #e4ecff;
  border-radius: 2px;
}

.spin svg { width: 10px; height: 8px; }

.work {
  flex: 1;
  min-height: 0;
  display: flex;
}

/* navigator */
.nav {
  width: 267px;
  display: flex;
  flex-direction: column;
  padding: 1px 0 2px 1px;
}

.tabs {
  display: flex;
  align-items: flex-end;
  gap: 2px;
}

.tab {
  width: 30px;
  height: 27px;
  display: grid;
  place-items: center;
  background: linear-gradient(#fdfdfb, #eeece2);
  border: 1px solid #91a7b4;
  border-bottom: 0;
  border-radius: 3px 3px 0 0;
}

.tab svg { width: 20px; height: 20px; }

.tab.active {
  width: 34px;
  height: 29px;
  padding-bottom: 3px;
  background: #fff;
  border-top: 2px solid #f0982c;
}

.panel {
  flex: 1;
  min-height: 0;
  display: flex;
  flex-direction: column;
  padding: 1px 1px 1px 0;
  background: #fcfcfe;
  border: 1px solid #919b9c;
  border-left-color: #fff;
}

.actions {
  display: flex;
  gap: 2px;
  padding: 1px 1px;
}

.actions button {
  width: 78px;
  height: 19px;
  display: flex;
  align-items: baseline;
  justify-content: flex-end;
  padding-right: 6px;
  background: linear-gradient(#fff, #ecebe6 85%, #d6d0c5);
  border: 1px solid #1c4880;
  border-radius: 3px;
}

.actions .caret {
  align-self: center;
  margin-left: 4px;
  border-width: 5px 4px 0;
}

.tree-box {
  flex: 1;
  min-height: 0;
  border: 1px solid #7f9db9;
  background: #fff;
}

.tree-head {
  height: 17px;
  background: #ece9d8;
  border-right: 1px solid #fff;
  border-bottom: 1px solid #d0ccbc;
}

.tree { padding: 2px 0 0 2px; }

.tree li {
  height: 16px;
  display: flex;
  align-items: center;
  white-space: nowrap;
}

.tree li > .en { padding-top: 1px; }
.tree li.root { gap: 4px; }
.br { width: 20px; height: 16px; }
.ti { width: 16px; height: 14px; margin-right: 2px; }

/* sashes */
.sashes {
  width: 14px;
  display: flex;
  padding-left: 2px;
}

.sash {
  width: 6px;
  display: flex;
  align-items: center;
  border-left: 1px solid #9cacd8;
}

.sash.up { padding-bottom: 50px; }

.sash.down {
  padding-top: 50px;
  border-left: 1px solid #6c84cc;
  border-right: 1px solid #7c90cc;
}

.sash button {
  width: 6px;
  height: 50px;
  display: grid;
  place-items: center;
  background: #c4d4fc;
}

.sash svg { width: 5px; height: 8px; }

.viewport {
  flex: 1;
  min-width: 0;
  background: linear-gradient(#9d9a8e, #bfbcae 50%, #e2e0d5);
}

.viewport svg {
  width: 100%;
  height: 100%;
}

/* right feature toolbars */
.rail {
  display: flex;
  background: linear-gradient(90deg, #f6f6f4, #ece9d8);
}

.rail-a { width: 41px; }
.rail-b { width: 28px; }
.pair { display: flex; }
.pair .drop { padding-right: 2px; }

.rule {
  display: block;
  height: 13px;
  margin: 0 0 0 2px;
  background: linear-gradient(90deg, #b4b2a6 50%, transparent 50%) 0 50% / 4px 2px repeat-x;
}

/* status bar */
.status {
  height: 24px;
  display: flex;
}

.status-l {
  flex: 1;
  border-right: 1px solid #aca899;
}

.status-r {
  width: 336px;
  display: flex;
  justify-content: flex-end;
  align-items: center;
  gap: 4px;
}

.combo {
  position: relative;
  width: 178px;
}

.combo select {
  width: 100%;
  height: 18px;
  padding: 0 3px;
  appearance: none;
  border: 1px solid #7f9db9;
  border-radius: 0;
  background: #fff;
  color: #000;
  font: inherit;
  line-height: 16px;
}

.combo svg {
  position: absolute;
  top: 2px;
  right: 2px;
  width: 14px;
  height: 14px;
  pointer-events: none;
}

.light {
  width: 57px;
  padding-left: 6px;
  border-left: 1px solid #aca899;
}

.light svg { width: 12px; height: 20px; }

/* taskbar */
.taskbar {
  height: 30px;
  display: flex;
  align-items: center;
  color: #fff;
  background: linear-gradient(#1c5cd8, #4c94f4 8%, #2a64e0 20%, #245edb 80%, #1941a5);
}

.start {
  width: 96px;
  height: 30px;
  display: flex;
  align-items: center;
  gap: 5px;
  padding-left: 10px;
  border-radius: 0 10px 10px 0;
  background: linear-gradient(#2c7c2c, #5cb85c 10%, #3c9a3c 30%, #379a37 80%, #246c24);
  box-shadow: 1px 0 3px #0c2c6c;
}

.start svg { width: 20px; height: 20px; }

.start em {
  font-size: 19px;
  line-height: 24px;
  text-shadow: 1px 1px 1px #1c4c1c;
}

.quick {
  width: 103px;
  display: flex;
  align-items: center;
  gap: 5px;
  padding-left: 12px;
}

.quick svg { width: 18px; height: 18px; }

.more {
  padding-bottom: 10px;
  margin-left: 6px;
}

.tasks {
  flex: 1;
  min-width: 0;
  display: flex;
  gap: 2px;
}

.tasks button {
  width: 158px;
  height: 25px;
  display: flex;
  align-items: center;
  gap: 4px;
  padding-left: 8px;
  white-space: nowrap;
  border-radius: 2px;
  background: linear-gradient(#5c9cfc, #3c81f3 20%, #3a7ef0 85%, #2c68d8);
}

.tasks button svg { width: 17px; height: 17px; }

.tasks button.cur {
  background: #1e50b8;
  box-shadow: inset 1px 1px 2px #0c3484;
}

.tasks button svg.i14 { width: 14px; height: 14px; margin: 0 2px; }

.kbd {
  width: 16px;
  height: 14px;
  margin-right: 16px;
}

.tray {
  height: 30px;
  display: flex;
  align-items: center;
  width: 149px;
  background: linear-gradient(#0c78d8, #28b4fc 10%, #1290e8 25%, #1290e8 80%, #0c6cbc);
  box-shadow: -1px 0 #0c3c9c;
}

.tray svg { width: 18px; height: 18px; }
.tray button { margin-left: -9px; }
.tray time { margin-left: 7px; }
```
